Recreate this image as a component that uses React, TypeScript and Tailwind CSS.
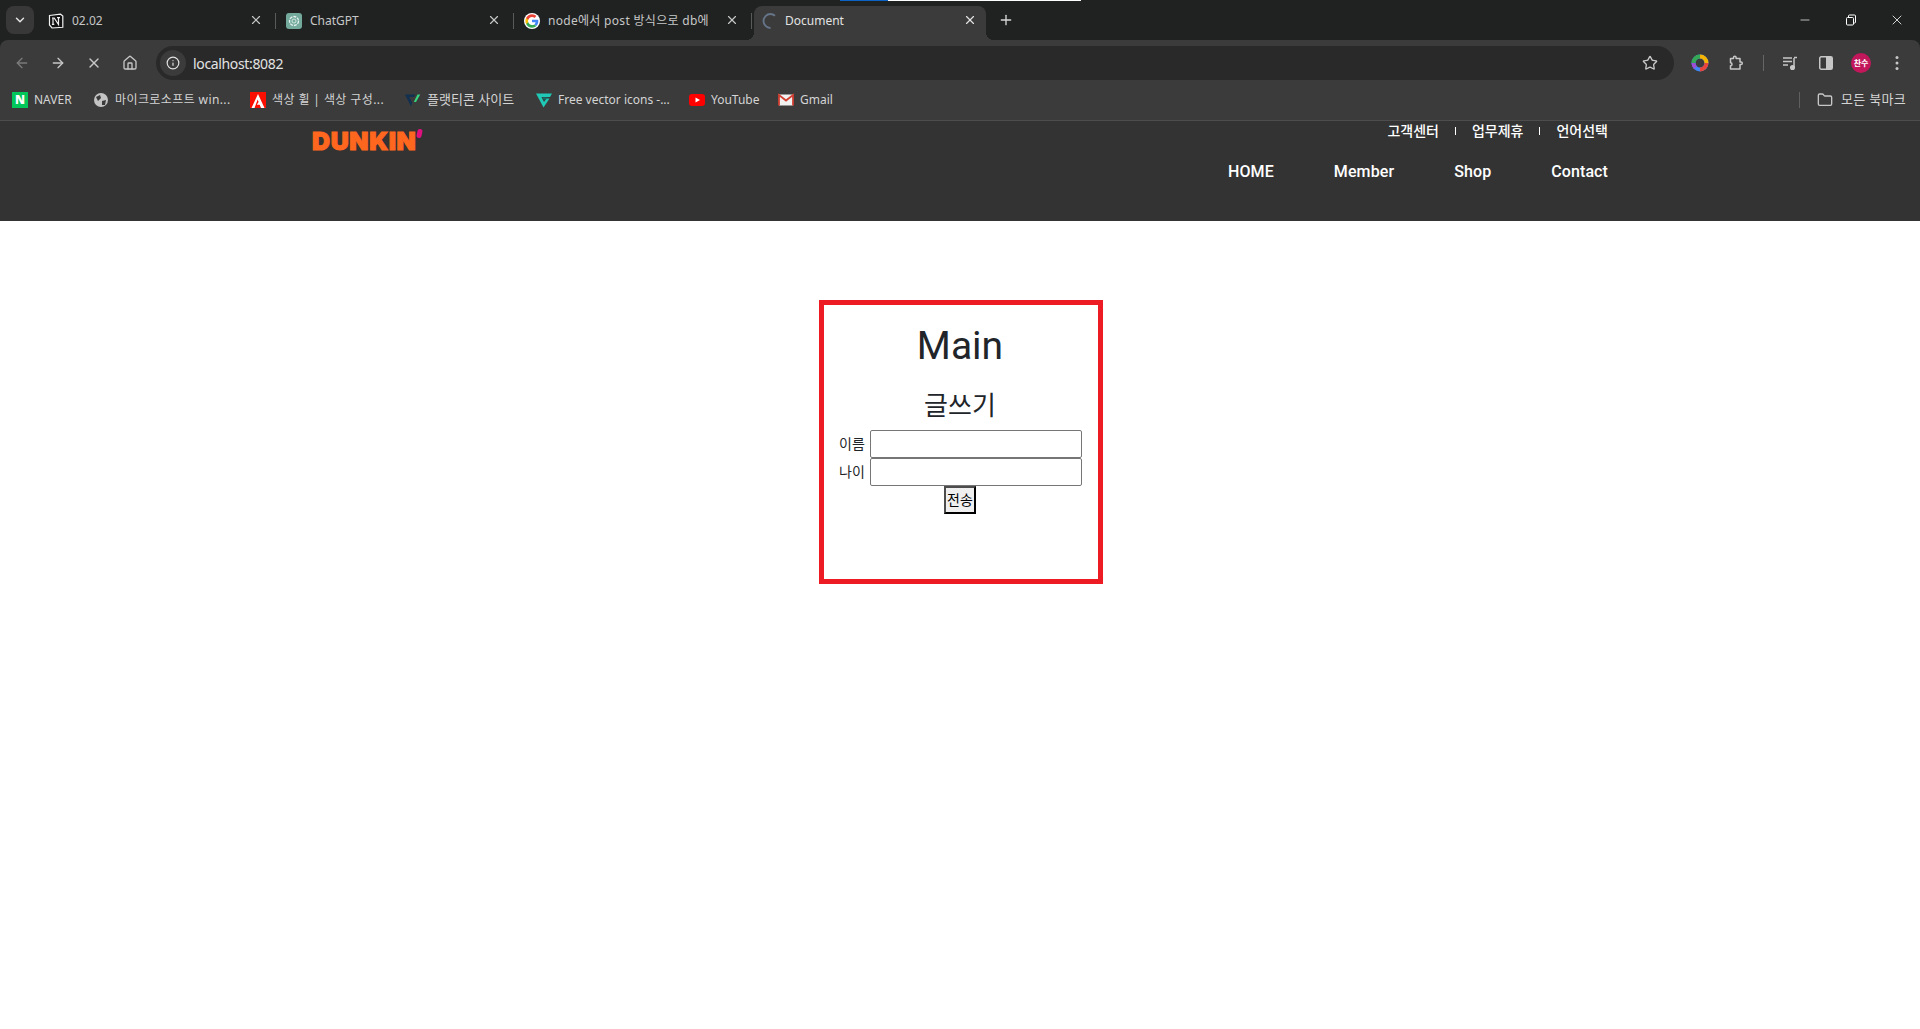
import React from 'react';
import { ArrowLeft, ArrowRight, ChevronDown, Folder, Home, Info, Minus, Plus, Star, X } from 'lucide-react';

const NotionIcon = () => (
  <svg width="16" height="16" viewBox="0 0 16 16" className="shrink-0">
    <path d="M1.500 2.500 12.500 1.200 14.800 3v11.300L4 15 1.500 12z" fill="#111" stroke="#f2f2f2" strokeWidth="1.200" />
    <path d="M5 5.200v6M4 5h2.200l4.300 6.500V4.500M9 4.600h3M3.900 11.400h2.400" fill="none" stroke="#f2f2f2" strokeWidth="1.200" />
  </svg>
);

const ChatGptIcon = () => (
  <svg width="16" height="16" viewBox="0 0 16 16" className="shrink-0">
    <rect width="16" height="16" rx="3" fill="#74aa9c" />
    <circle cx="8" cy="8" r="4.500" fill="none" stroke="#e6f2ef" strokeWidth="1.300" strokeDasharray="3 1" />
    <circle cx="8" cy="8" r="2" fill="none" stroke="#e6f2ef" strokeWidth="0.800" />
  </svg>
);

const GoogleIcon = () => (
  <svg width="16" height="16" viewBox="0 0 48 48" className="shrink-0">
    <circle cx="24" cy="24" r="24" fill="#fff" />
    <path fill="#4285f4" d="M43 24.500c0-1.400-.1-2.700-.4-4H24v7.600h10.800c-.5 2.500-1.900 4.600-4 6l6.200 4.800c3.700-3.400 6-8.400 6-14.400z" />
    <path fill="#34a853" d="M24 44c5.400 0 9.900-1.800 13-4.900l-6.200-4.800c-1.800 1.200-4 1.900-6.800 1.900-5.200 0-9.600-3.500-11.200-8.200H6.400v5C9.600 39.500 16.300 44 24 44z" />
    <path fill="#fbbc05" d="M12.800 28c-.4-1.200-.6-2.600-.6-4s.2-2.800.6-4v-5H6.400A20 20 0 0 0 4 24c0 3.200.8 6.300 2.400 9z" />
    <path fill="#ea4335" d="M24 11.800c3 0 5.600 1 7.600 3l5.600-5.600C33.900 6.100 29.400 4 24 4 16.300 4 9.600 8.500 6.400 15l6.400 5c1.600-4.700 6-8.200 11.200-8.200z" />
  </svg>
);

const Spinner = () => (
  <svg width="16" height="16" viewBox="0 0 16 16" className="shrink-0">
    <path d="M13 2.700A7 7 0 0 0 8.500 1 7 7 0 0 0 8.500 15" fill="none" stroke="#66758a" strokeWidth="1.800" />
  </svg>
);

const AdobeIcon = () => (
  <svg width="16" height="16" viewBox="0 0 16 16" className="shrink-0">
    <rect width="16" height="16" fill="#fa0f00" />
    <path d="M8 2 14.500 16H11L9.700 12.800H6.800L8.600 10 7.700 7.500 4.500 16H1.500z" fill="#fff" />
  </svg>
);

const PlatformIcon = () => (
  <svg width="16" height="16" viewBox="0 0 16 16" className="shrink-0">
    <path d="M0 2.500h10.500L9 5H4.200L7.200 10.500 6 14.500z" fill="#12304f" />
    <path d="M12.500 2.500h2.700L11 10H8.800z" fill="#38d67f" />
  </svg>
);

const FlaticonIcon = () => (
  <svg width="16" height="16" viewBox="0 0 16 16" className="shrink-0">
    <path d="M0 1.500h16l-2 3.500H5.500L8 10l2.500-3.500h3L7.500 15.500z" fill="#1fc9b5" />
    <path d="M6.500 5.500h5L10 7.500H7.500z" fill="#0f766e" />
  </svg>
);

const YoutubeIcon = () => (
  <svg width="16" height="16" viewBox="0 0 16 16" className="shrink-0">
    <rect y="2" width="16" height="12" rx="3" fill="#ff0000" />
    <path d="M6.500 5.500 11 8l-4.500 2.500z" fill="#fff" />
  </svg>
);

const GmailIcon = () => (
  <svg width="16" height="16" viewBox="0 0 16 16" className="shrink-0">
    <rect x="1" y="2.500" width="14" height="11" fill="#f2f2f2" />
    <path d="M1 13.500V3l7 5.500L15 3v10.500" fill="none" stroke="#d23f31" strokeWidth="1.800" />
  </svg>
);

const ColorWheel = () => (
  <svg width="18" height="18" viewBox="0 0 18 18">
    <circle cx="9" cy="9" r="6.500" fill="none" strokeWidth="4" stroke="#4285f4" />
    <path d="M9 2.500A6.500 6.500 0 0 1 15.500 9" fill="none" strokeWidth="4" stroke="#f4b400" />
    <path d="M2.500 9A6.500 6.500 0 0 1 9 2.500" fill="none" strokeWidth="4" stroke="#34a853" />
    <path d="M15.500 9A6.500 6.500 0 0 1 9 15.500" fill="none" strokeWidth="4" stroke="#e8453c" />
    <path d="M4.400 13.600A6.500 6.500 0 0 1 2.500 9" fill="none" strokeWidth="4" stroke="#9c4fd6" />
  </svg>
);

const ExtensionIcon = () => (
  <svg width="16" height="16" viewBox="0 0 16 16" fill="none" stroke="#c7c7c7" strokeWidth="1.500" strokeLinejoin="round">
    <path d="M2.500 3.500H5.500V2.500a1.300 1.300 0 0 1 2.600 0v1h3.900v3.500h1a1.300 1.300 0 0 1 0 2.600h-1V14H2.500v-3.200a1.500 1.500 0 0 0 0-3z" />
  </svg>
);

const QueueIcon = () => (
  <svg width="16" height="16" viewBox="0 0 16 16" fill="none" stroke="#c7c7c7" strokeWidth="1.500">
    <path d="M1 3h9M1 6.500h9M1 10h5" />
    <path d="M12 3v9" />
    <path d="M12 2.500h3" />
    <circle cx="10.500" cy="12.500" r="1.800" fill="#c7c7c7" />
  </svg>
);

const SidePanelIcon = () => (
  <svg width="16" height="16" viewBox="0 0 16 16">
    <rect x="1.750" y="1.750" width="12.500" height="12.500" rx="1.500" fill="none" stroke="#c7c7c7" strokeWidth="1.500" />
    <rect x="8" y="2" width="6" height="12" fill="#c7c7c7" />
  </svg>
);

const DotsIcon = () => (
  <svg width="16" height="16" viewBox="0 0 16 16" fill="#c7c7c7">
    <circle cx="8" cy="2.500" r="1.500" />
    <circle cx="8" cy="8" r="1.500" />
    <circle cx="8" cy="13.500" r="1.500" />
  </svg>
);

const RestoreIcon = () => (
  <svg width="12" height="12" viewBox="0 0 12 12" fill="none" stroke="#fff" strokeWidth="1">
    <rect x="1.500" y="3.500" width="7" height="7.500" rx="1" />
    <path d="M3.500 3.500V2a1 1 0 0 1 1-1h5a1 1 0 0 1 1 1v6a1 1 0 0 1-1 1H8.500" />
  </svg>
);

type TabItem = {
  title: string;
  text: string;
  icon: React.ReactNode;
};

const TABS: TabItem[] = [
  { title: '02.02', text: '', icon: <NotionIcon /> },
  { title: 'ChatGPT', text: '', icon: <ChatGptIcon /> },
  { title: 'node에서 post 방식으로 db에', text: 'tracking-[0.3px]', icon: <GoogleIcon /> },
];

const BOOKMARKS = [
  { label: 'NAVER', width: 'w-[81px]', text: '', icon: <span className="flex size-4 shrink-0 items-center justify-center bg-[#03c75a] text-[12px] font-black text-white">N</span> },
  { label: '마이크로소프트 win...', width: 'w-[157px]', text: 'tracking-[0.4px]', icon: <svg width="16" height="16" viewBox="0 0 16 16" className="shrink-0"><circle cx="8" cy="8" r="7" fill="#c4c4c4" /><path d="M3 5l4-2 1 3-3 3zM9 9l4-1-1 5-3 0z" fill="#3b3b3b" /></svg> },
  { label: '색상 휠 | 색상 구성...', width: 'w-[155px]', text: 'tracking-[0.4px]', icon: <AdobeIcon /> },
  { label: '플랫티콘 사이트', width: 'w-[131px]', text: 'text-[13px]', icon: <PlatformIcon /> },
  { label: 'Free vector icons -...', width: 'w-[153px]', text: '', icon: <FlaticonIcon /> },
  { label: 'YouTube', width: 'w-[89px]', text: '', icon: <YoutubeIcon /> },
  { label: 'Gmail', width: 'w-[70px]', text: '', icon: <GmailIcon /> },
];

const TOP_LINKS = ['고객센터', '업무제휴', '언어선택'];
const NAV_LINKS = ['HOME', 'Member', 'Shop', 'Contact'];

function BrowserChrome() {
  return (
    <div className="bg-[#202222] font-['Noto_Sans','Noto_Sans_CJK_KR',sans-serif]">
      <div className="relative flex h-10 items-start pl-[6px] pt-[6px]">
        <div className="absolute left-[840px] top-0 flex h-px w-[241px]">
          <span className="w-12 bg-[#0b63c5]" />
          <span className="flex-1 bg-white" />
        </div>
        <button className="flex h-7 w-7 items-center justify-center rounded-lg bg-[#383838] text-[#e3e3e3]">
          <ChevronDown size={14} strokeWidth={2.500} />
        </button>
        <div className="ml-1 flex h-[34px]">
          {TABS.map((tab) => (
            <div key={tab.title} className="relative flex h-[30px] w-[238px] items-center pl-[10px] pr-[13px] text-[12px] text-[#c7c7c7]">
              {tab.icon}
              <span className={`ml-2 flex-1 whitespace-nowrap ${tab.text}`}>{tab.title}</span>
              <X size={14} className="mb-[2px] shrink-0 text-[#c7c7c7]" />
              <span className="absolute right-0 top-[7px] h-4 w-px bg-[#5a5a5a]" />
            </div>
          ))}
          <div className="relative ml-[2px] flex h-[34px] w-[232px] items-start rounded-t-lg bg-[#3b3b3b] pl-2 pr-[9px] pt-[7px] text-[12px] text-[#e3e3e3]">
            <span className="absolute -left-2 bottom-0 size-2 bg-[radial-gradient(circle_at_0_0,transparent_8px,#3b3b3b_8px)]" />
            <span className="absolute -right-2 bottom-0 size-2 bg-[radial-gradient(circle_at_100%_0,transparent_8px,#3b3b3b_8px)]" />
            <Spinner />
            <span className="ml-[7px] flex-1 leading-4">Document</span>
            <X size={14} className="shrink-0 text-[#e3e3e3]" />
          </div>
          <Plus size={16} className="ml-3 mt-[6px] text-[#d8d8d8]" />
        </div>
        <div className="ml-auto flex h-7 items-center text-white">
          <span className="flex w-[46px] justify-center"><Minus size={14} strokeWidth={1.200} /></span>
          <span className="flex w-[46px] justify-center"><RestoreIcon /></span>
          <span className="flex w-[46px] justify-center"><X size={16} strokeWidth={1.200} /></span>
        </div>
      </div>

      <div className="rounded-t-lg bg-[#3b3b3b] pt-[6px]">
        <div className="flex h-[34px] items-center">
          <div className="flex w-[152px] items-center justify-start pl-[14px]">
            <ArrowLeft size={16} className="text-[#7b7b7b]" />
            <ArrowRight size={16} className="ml-5 text-[#c7c7c7]" />
            <X size={16} className="ml-5 text-[#c7c7c7]" />
            <Home size={16} className="ml-5 text-[#c7c7c7]" />
          </div>
          <div className="ml-1 flex h-[34px] w-[1518px] items-center rounded-full bg-[#292929] pl-1 pr-4">
            <span className="flex size-[26px] items-center justify-center rounded-full bg-[#3b3b3b]">
              <Info size={14} className="text-[#e3e3e3]" />
            </span>
            <span className="ml-[7px] flex-1 text-[14px] tracking-[-0.35px] text-[#e3e3e3]">localhost:8082</span>
            <Star size={16} className="text-[#c7c7c7]" />
          </div>
          <div className="ml-[17px] flex items-center">
            <ColorWheel />
            <span className="ml-[19px]"><ExtensionIcon /></span>
            <span className="ml-[19px] h-4 w-px bg-[#666]" />
            <span className="ml-[18px]"><QueueIcon /></span>
            <span className="ml-5"><SidePanelIcon /></span>
            <span className="ml-[17px] flex size-[20px] items-center justify-center rounded-full bg-[#c2185b] text-[8px] font-bold text-white">찬수</span>
            <span className="ml-[18px]"><DotsIcon /></span>
          </div>
        </div>
        <div className="flex h-[41px] items-center border-b border-[#4d4d4d] pl-3 text-[12px] text-[#d4d4d4]">
          {BOOKMARKS.map((mark) => (
            <div key={mark.label} className={`flex items-center gap-[6px] whitespace-nowrap ${mark.width}`}>
              {mark.icon}
              <span className={mark.text}>{mark.label}</span>
            </div>
          ))}
          <div className="ml-auto flex items-center pr-[14px]">
            <span className="h-4 w-px bg-[#5f5f5f]" />
            <Folder size={16} className="ml-[17px] text-[#c7c7c7]" />
            <span className="ml-2 text-[13px] tracking-[0.3px]">모든 북마크</span>
          </div>
        </div>
      </div>
    </div>
  );
}

function SiteHeader() {
  return (
    <header className="h-[100px] bg-[#333333] font-['Roboto','Noto_Sans_CJK_KR',sans-serif] text-white">
      <div className="mx-auto flex w-[1296px] items-start justify-between">
        <div className="mt-[3px] flex items-start text-[#ff671f]">
          <span className="text-[25px] font-black leading-[34px] tracking-[0.6px] font-['Inter',sans-serif] [-webkit-text-stroke:1px_#ff671f]">DUNKIN</span>
          <span className="ml-[1px] mt-[5px] h-[9px] w-[5px] rotate-12 rounded-full bg-[#e0117f]" />
        </div>
        <div className="flex flex-col items-end">
          <ul className="flex h-5 items-center text-[14px] font-medium leading-5">
            {TOP_LINKS.map((link, index) => (
              <li key={link} className="flex items-center">
                {index > 0 && <span className="mx-4 h-2 w-px bg-white" />}
                {link}
              </li>
            ))}
          </ul>
          <nav className="mt-[19px] flex gap-[60px] text-[16px] font-medium leading-6 tracking-[0.1px]">
            {NAV_LINKS.map((link) => (
              <a key={link}>{link}</a>
            ))}
          </nav>
        </div>
      </div>
    </header>
  );
}

function WriteBox() {
  return (
    <main className="pt-[79px] font-['Roboto','Noto_Sans_CJK_KR',sans-serif] text-[#212529]">
      <div className="ml-[819px] h-[284px] w-[284px] border-[5px] border-[#ed1c24] pt-[17px] text-center">
        <h1 className="mr-[2px] text-[39px] font-normal leading-[48px]">Main</h1>
        <h3 className="mr-[2px] mt-[19px] text-[26px] font-normal leading-[34px]">글쓰기</h3>
        <form className="mt-[7px] flex flex-col items-center">
          <label className="flex h-[28px] w-[274px] items-center pl-[15px] text-[14px]">
            <span className="w-[26px] whitespace-nowrap">이름</span>
            <input className="ml-[5px] h-[28px] w-[212px] rounded-[2px] border border-[#767676] bg-white" />
          </label>
          <label className="flex h-[28px] w-[274px] items-center pl-[15px] text-[14px]">
            <span className="w-[26px] whitespace-nowrap">나이</span>
            <input className="ml-[5px] h-[28px] w-[212px] rounded-[2px] border border-[#767676] bg-white" />
          </label>
          <button type="button" className="mr-[2px] h-[28px] w-[32px] border-2 border-t-[#4d4d4d] border-l-[#4d4d4d] border-r-black border-b-black bg-[#efefef] text-[14px] leading-none text-black">
            전송
          </button>
        </form>
      </div>
    </main>
  );
}

export default function App() {
  return (
    <div className="h-[1029px] overflow-hidden bg-white">
      <BrowserChrome />
      <SiteHeader />
      <WriteBox />
    </div>
  );
}
